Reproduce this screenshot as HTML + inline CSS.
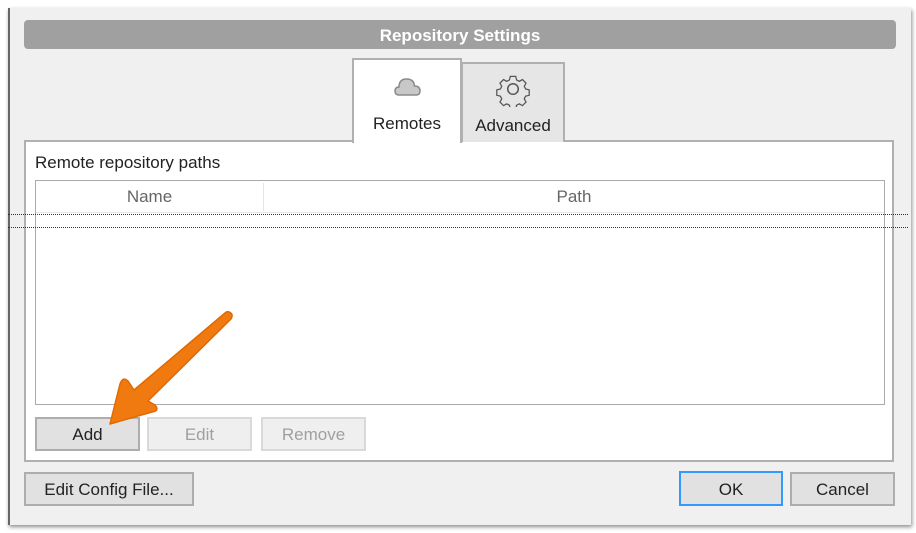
<!DOCTYPE html>
<html><head><style>
body{margin:0;width:916px;height:533px;background:#fff;position:relative;overflow:hidden;font-family:"Liberation Sans",sans-serif;}
.dlg{position:absolute;left:8px;top:8px;width:901px;height:517px;background:#f0f0f0;box-shadow:1px 2px 4px rgba(0,0,0,.45);border-left:2px solid #666;}
.abs{position:absolute;box-sizing:border-box;}
.title{left:24px;top:20px;width:872px;height:29px;background:#a0a0a0;border-radius:4px;color:#fff;font-weight:bold;font-size:17px;text-align:center;line-height:31px;}
.btn{border:2px solid #adadad;background:#e1e1e1;font-size:17px;text-align:center;color:#222;}
.dis{border-color:#d9d9d9;background:#efefef;color:#a0a0a0;}
.dot{left:8px;width:900px;height:0;border-top:1px dotted #333;}
</style></head><body>
<div class="dlg"></div>
<div class="abs title">Repository Settings</div>
<div class="abs" style="left:24px;top:140px;width:870px;height:322px;background:#fff;border:2px solid #b0b0b0;"></div>
<div class="abs" style="left:461px;top:62px;width:104px;height:80px;background:#e6e6e6;border:2px solid #b0b0b0;border-bottom:none;"></div>
<div class="abs" style="left:352px;top:58px;width:110px;height:85px;background:#fff;border:2px solid #b0b0b0;border-bottom:none;"></div>
<svg class="abs" style="left:393px;top:75px" width="30" height="22" viewBox="0 0 30 22"><path d="M6 20 Q2 20 2 16 Q2 12 6 12 Q6 4 13.5 4 Q21 4 21.5 11 Q27 11 27 16 Q27 20 23 20 Z" fill="#c8c8c8" stroke="#8a8a8a" stroke-width="1.5"/></svg>
<svg class="abs" style="left:495px;top:71px" width="36" height="36" viewBox="0 0 34 34"><g fill="none" stroke="#555" stroke-width="1.4"><path d="M14 3h6l1 4 3 1.5 3.5-2 4 4-2 3.5 1.5 3 4 1v6l-4 1-1.5 3 2 3.5-4 4-3.5-2-3 1.5-1 4h-6l-1-4-3-1.5-3.5 2-4-4 2-3.5-1.5-3-4-1v-6l4-1 1.5-3-2-3.5 4-4 3.5 2 3-1.5z" transform="translate(17 17) scale(.85) translate(-17 -17)"/><circle cx="17" cy="17" r="5"/></g></svg>
<div class="abs" style="left:352px;top:114px;width:110px;text-align:center;font-size:17px;color:#222;">Remotes</div>
<div class="abs" style="left:461px;top:116px;width:104px;text-align:center;font-size:17px;color:#222;">Advanced</div>
<div class="abs" style="left:35px;top:153px;font-size:17px;color:#222;">Remote repository paths</div>
<div class="abs" style="left:35px;top:180px;width:850px;height:225px;border:1px solid #aaa;background:#fff;"></div>
<div class="abs" style="left:36px;top:181px;width:848px;height:32px;border-bottom:1px solid #e5e5e5;"></div>
<div class="abs" style="left:263px;top:183px;width:1px;height:28px;background:#e5e5e5;"></div>
<div class="abs" style="left:36px;top:187px;width:227px;text-align:center;font-size:17px;color:#666;">Name</div>
<div class="abs" style="left:264px;top:187px;width:620px;text-align:center;font-size:17px;color:#666;">Path</div>
<div class="abs dot" style="top:214px"></div>
<div class="abs dot" style="top:227px"></div>
<div class="abs btn" style="left:35px;top:417px;width:105px;height:34px;line-height:32px;">Add</div>
<div class="abs btn dis" style="left:147px;top:417px;width:105px;height:34px;line-height:32px;">Edit</div>
<div class="abs btn dis" style="left:261px;top:417px;width:105px;height:34px;line-height:32px;">Remove</div>
<div class="abs btn" style="left:24px;top:472px;width:170px;height:34px;line-height:32px;">Edit Config File...</div>
<div class="abs btn" style="left:679px;top:471px;width:104px;height:35px;line-height:33px;border-color:#3399ff;">OK</div>
<div class="abs btn" style="left:790px;top:472px;width:105px;height:34px;line-height:32px;">Cancel</div>
<svg class="abs" style="left:0;top:0" width="916" height="533"><path d="M229 312 Q234 314 231 319 L148 401 L155 405 Q160 411 152 412 L110 424 L120 384 Q123 376 128 381 L134 390 L225 313 Q227 311 229 312Z" fill="#f07a10" stroke="#e06a00" stroke-width="1.5" stroke-linejoin="round"/></svg>
</body></html>
